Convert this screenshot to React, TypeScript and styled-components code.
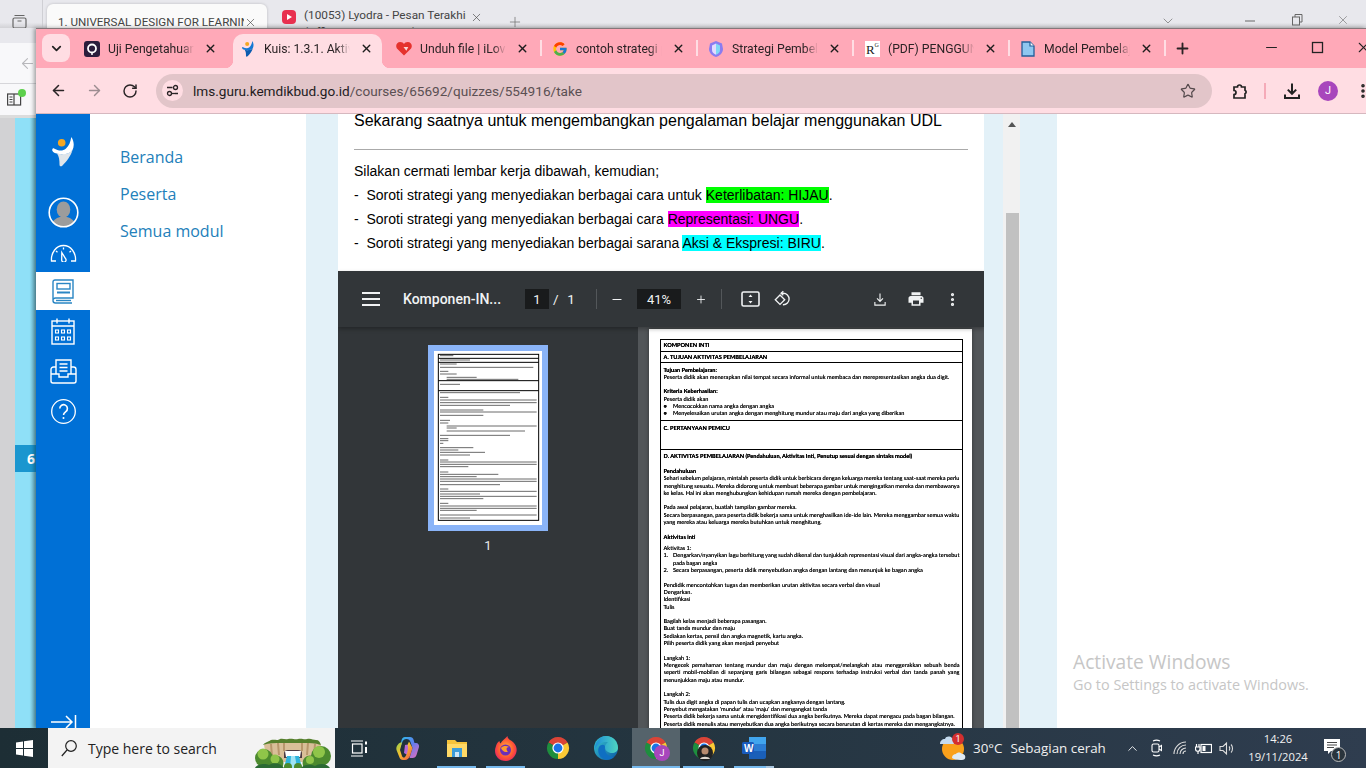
import React from "react";
import styled, { createGlobalStyle } from "styled-components";
import { ArrowLeft, ArrowRight, RotateCw, Star, MoreVertical, Plus, X, Minus, ChevronDown, ChevronUp } from "lucide-react";
import { FcGoogle } from "react-icons/fc";

const Global = createGlobalStyle`
  html, body { margin: 0; padding: 0; width: 1366px; height: 768px; overflow: hidden; background: #fff; }
  * { box-sizing: border-box; }
`;

const Desktop = styled.div`
  width: 1366px; height: 768px; display: flex; flex-direction: column; overflow: hidden;
  font-family: "Roboto", "Liberation Sans", sans-serif;
`;
const Stage = styled.div`
  position: relative; height: 728px; flex: none; background: #e8e8ed; overflow: hidden;
`;

/* background browser window */
const BackTop = styled.div`
  height: 28px; display: flex; background: linear-gradient(#e8e8ed 0 80%, #d2d2d6 100%);
`;
const BackRail = styled.div`
  width: 43px; border-right: 1px solid #cfcfd4; display: flex; align-items: center; justify-content: center; padding-right: 4px; padding-top: 15px; color: #666;
`;
const BackTab = styled.div`
  width: 220px; margin: 4px 0 0 4px; border-radius: 6px 6px 0 0; background: #fafafa; display: flex; align-items: center; padding: 12px 10px 0 11px;
  box-shadow: 0 0 3px rgba(0,0,0,.2); font-size: 11.6px; color: #444;
`;
const BackTabText = styled.span`
  flex: none; width: 186px; white-space: nowrap; overflow: hidden; line-height: 15px;
`;
const BackTabTwo = styled.div`
  width: 210px; margin: 4px 0 0 15px; display: flex; align-items: flex-start; font-size: 11.8px; color: #444;
`;
const BackYtIcon = styled.svg`
  margin-top: 6px; flex: none;
`;
const BackYtText = styled.span`
  flex: none; width: 162px; margin: 3px 0 0 8px; line-height: 17px; height: 21px; overflow: hidden; white-space: nowrap;
`;
const BackYtClose = styled.span`
  flex: none; margin: 7px 0 0 4px; display: flex;
`;
const BackPlus = styled.div`
  margin: 14px 0 0 15px; color: #777; height: 16px;
`;
const BackWinBtns = styled.div`
  margin-left: auto; padding: 13px 16px 0 0; display: flex; justify-content: flex-end; align-items: flex-start; color: #666;
`;
const BackWinGap = styled.span<{ $l: number }>`
  margin-left: ${p => p.$l}px; display: flex;
`;
const BackBody = styled.div`
  width: 36px; height: 700px; display: flex; flex-direction: column;
`;
const BackHead = styled.div`
  height: 15px; background: #e8e8ed;
`;
const BackNav = styled.div`
  height: 40px; background: #f8f8fa; display: flex; align-items: center; justify-content: flex-end; color: #b8b8bc;
`;
const BackTool = styled.div`
  height: 32px; background: #f8f8fa; border-top: 1px solid #d6d6da; display: flex; align-items: center; padding-left: 7px; position: relative;
`;
const GreenDot = styled.span`
  position: absolute; left: 18px; top: 5px; width: 8px; height: 8px; border-radius: 50%; background: #5dd04d;
`;
const BackLine = styled.div`
  height: 3px; background: #dcdcdc;
`;
const BackSplit = styled.div`
  flex: 1; display: flex;
`;
const GrayCol = styled.div`
  width: 15px; background: #d2d2d4;
`;
const CyanCol = styled.div`
  flex: 1; background: linear-gradient(90deg, #8fe0f7 70%, #6db6ca 100%); padding-top: 327px;
`;
const NumBadge = styled.div`
  height: 27px; background: #1a96cf; color: #fff; font: bold 14px "Open Sans", sans-serif; display: flex; align-items: center; padding-left: 12px;
`;

/* chrome window */
const ChromeWindow = styled.div`
  position: absolute; left: 36px; top: 28px; right: 0; bottom: 0; display: flex; flex-direction: column;
  border-top: 1px solid #84777a; box-shadow: -2px 0 4px rgba(0,0,0,.35);
`;
const TabStrip = styled.div`
  height: 39px; flex: none; background: #ffa9b8; display: flex; align-items: flex-start; padding-left: 6px; padding-top: 5px;
`;
const ListBtn = styled.div`
  width: 28px; height: 28px; border-radius: 8px; background: #ffdde3; color: #222; display: flex; align-items: center; justify-content: center; flex: none; margin-right: 3px;
`;
const Tab = styled.div<{ $active?: boolean; $divider?: boolean }>`
  position: relative; width: 156px; height: 34px; flex: none; display: flex; align-items: center; padding-left: 11px; padding-bottom: 5px;
  ${p => p.$active && `
    background: #ffdde3; border-radius: 10px 10px 0 0; margin: 0 3px 0 4px; width: 149px; padding-left: 7px; padding-bottom: 5px;
    &::before, &::after { content: ""; position: absolute; bottom: 0; width: 8px; height: 8px; }
    &::before { left: -8px; background: radial-gradient(circle at 0 0, #ffa9b8 8px, #ffdde3 8.5px); }
    &::after { right: -8px; background: radial-gradient(circle at 100% 0, #ffa9b8 8px, #ffdde3 8.5px); }
  `}
  ${p => p.$divider && `
    &::before { content: ""; position: absolute; left: -1px; top: 6px; width: 2px; height: 16px; background: #ffdde3; }
  `}
`;
const Fav = styled.span`
  width: 16px; height: 16px; flex: none; display: flex; align-items: center; justify-content: center;
`;
const TabLabel = styled.span`
  width: 86px; margin-left: 8px; flex: none; white-space: nowrap; overflow: hidden; font-size: 12.2px; color: #2b2325;
  mask-image: linear-gradient(90deg, #000 85%, transparent);
`;
const TabClose = styled.span`
  margin-left: 10px; display: flex; color: #1c1c1c;
`;
const TabEnd = styled.div`
  width: 2px; height: 16px; margin: 6px 0 0 -1px; background: #ffdde3; flex: none;
`;
const NewTab = styled.div`
  margin: 6px 0 0 8px; color: #2a2224; display: flex; height: 16px; flex: none;
`;
const WinBtns = styled.div`
  margin-left: auto; display: flex; gap: 29px; padding-top: 5px; color: #222; margin-right: -6px;
`;
const ToolBar = styled.div`
  height: 46px; flex: none; background: #ffdde3; border-bottom: 1px solid #d6b8bf; display: flex; align-items: center; padding-left: 14px;
`;
const NavBtn = styled.span<{ $dim?: boolean }>`
  display: flex; width: 36px; flex: none; color: ${p => (p.$dim ? "#9c8c90" : "#2a2426")};
`;
const Omnibox = styled.div`
  width: 1056px; height: 34px; margin-left: -2px; flex: none; border-radius: 17px; background: #e2c5c9; display: flex; align-items: center; padding-left: 6px; padding-right: 16px;
`;
const InfoChip = styled.span`
  width: 21px; height: 21px; border-radius: 50%; background: #ffdde3; display: flex; align-items: center; justify-content: center; flex: none;
`;
const Url = styled.span`
  margin-left: 10px; font-size: 13.6px; color: #5b5053; white-space: nowrap; flex: 1;
  & b { font-weight: 400; color: #231c1e; }
`;
const TailIcons = styled.div`
  display: flex; align-items: center; margin-left: 19px; color: #222; flex: none;
`;
const ToolSep = styled.span`
  width: 1.5px; height: 16px; background: #f5aab8; margin: 0 17px 0 15px;
`;
const ProfileChip = styled.span`
  width: 20px; height: 20px; border-radius: 50%; background: #a846bc; color: #fff; font-size: 11px; display: flex; align-items: center; justify-content: center; margin: 0 16px 0 17.5px; flex: none;
`;

/* moodle page */
const PageArea = styled.div`
  flex: 1; min-height: 0; display: flex; overflow: hidden; background: #fff;
`;
const Rail = styled.nav`
  width: 54px; flex: none; background: #0070d6; display: flex; flex-direction: column;
`;
const RailItem = styled.div<{ $h: number; $active?: boolean }>`
  height: ${p => p.$h}px; flex: none; display: flex; align-items: center; justify-content: center; background: ${p => (p.$active ? "#fff" : "transparent")}; color: #fff;
`;
const RailFoot = styled.div`
  margin-top: auto; height: 14px; display: flex; justify-content: center; align-items: flex-start; color: #fff; overflow: hidden;
`;
const MenuPanel = styled.div`
  width: 216px; flex: none; padding: 25px 0 0 30px; display: flex; flex-direction: column;
`;
const MenuLink = styled.a`
  height: 37px; font: 16px/37px "Open Sans", sans-serif; color: #2380ba;
`;
const Gutter = styled.div<{ $w: number }>`
  width: ${p => p.$w}px; flex: none; background: #e3f1f8;
`;
const Article = styled.main`
  width: 646px; flex: none; background: #fff; overflow: hidden; font-family: "Liberation Sans", Arial, sans-serif; color: #000;
`;
const Lead = styled.p`
  margin: -3px 16px 0; font-size: 16px; line-height: 20px; white-space: nowrap;
`;
const Rule = styled.hr`
  margin: 18px 16px 9px; border: 0; border-top: 1px solid #aaa; height: 1px;
`;
const Line = styled.p`
  margin: 0 16px; font-size: 14px; line-height: 24px; white-space: pre;
`;
const Mark = styled.span<{ $c: string }>`
  background: ${p => p.$c};
`;

const Viewer = styled.section`
  margin-top: 16px; height: 457px; display: flex; flex-direction: column; font-family: "Roboto", sans-serif;
`;
const VBar = styled.div`
  height: 56px; flex: none; background: #323639; color: #f1f3f4; display: flex; align-items: center; position: relative; box-shadow: 0 2px 4px rgba(0,0,0,.3); z-index: 1;
`;
const VSlot = styled.span<{ $w: number; $l: number }>`
  width: ${p => p.$w}px; margin-left: ${p => p.$l}px; flex: none; display: flex; align-items: center; justify-content: center; height: 20px;
`;
const VTitle = styled.span`
  margin-left: 23px; width: 101px; flex: none; font-size: 14px; font-weight: 500; white-space: nowrap;
`;
const VField = styled.span<{ $w: number; $l: number }>`
  width: ${p => p.$w}px; margin-left: ${p => p.$l}px; height: 20px; background: #191b1c; flex: none; font-size: 13px; display: flex; align-items: center; justify-content: center;
`;
const VCount = styled.span`
  margin-left: 4px; flex: none; font-size: 13.5px; width: 20px; white-space: pre; word-spacing: 1px;
`;
const VSep = styled.span<{ $l: number }>`
  width: 1px; height: 20px; background: #53575a; margin-left: ${p => p.$l}px; flex: none;
`;
const VBody = styled.div`
  flex: 1; min-height: 0; display: flex; overflow: hidden;
`;
const ThumbPane = styled.aside`
  width: 300px; flex: none; background: #323639; display: flex; flex-direction: column; align-items: center; padding-top: 18px;
`;
const ThumbFrame = styled.div`
  width: 120px; height: 186px; background: #fff; border: 6px solid #8ab4f8; display: flex;
`;
const ThumbNum = styled.div`
  margin-top: 7px; color: #e8eaed; font-size: 13px; line-height: 15px;
`;
const SheetArea = styled.div`
  flex: 1; background: #525659; padding: 2px 12px 0 11px; overflow: hidden;
`;
const Sheet = styled.div`
  background: #fff; padding: 10px 9px 0 11px; height: 500px; box-shadow: 0 0 4px rgba(0,0,0,.4);
`;
const DocTable = styled.div`
  border: 1px solid #000; font: 5.65px/7.32px "Lato", "Open Sans", sans-serif; color: #111; filter: blur(0.3px); width: 303px; text-rendering: geometricPrecision; text-shadow: 0 0 .4px #000;
`;
const DocRow = styled.div<{ $h?: number; $top?: number }>`
  border-bottom: 1px solid #000; padding: ${p => p.$top ?? 1.5}px 2.5px 0 2.5px; ${p => (p.$h ? `height: ${p.$h}px;` : "")}
`;
const DocHead = styled.div`
  font-weight: 700; color: #000; white-space: nowrap; height: 7.32px;
`;
const DocText = styled.div<{ $fill?: boolean; $indent?: number; $gap?: number }>`
  height: 7.32px; white-space: nowrap; padding-left: ${p => p.$indent ?? 0}px; margin-top: ${p => p.$gap ?? 0}px;
  ${p => p.$fill && `white-space: normal; overflow: hidden; word-spacing: -.4px; text-align: justify; text-align-last: justify;`}
`;
const DocBlank = styled.div`
  height: 7.32px;
`;
const ItemMark = styled.span`
  position: absolute; margin-left: -9.5px;
`;

/* scrollbar */
const Scroll = styled.div`
  width: 17px; flex: none; background: #f1f1f1; display: flex; flex-direction: column;
`;
const ScrollHead = styled.div`
  height: 99px; flex: none; display: flex; justify-content: center; padding: 8px 0 0 1px;
`;
const ScrollThumb = styled.div`
  flex: 1; background: #c1c1c1; margin: 0 1px 0 3px;
`;
const RightPane = styled.div`
  flex: 1; background: #fff; padding: 535px 0 0 16px; font-family: "Open Sans", sans-serif; color: #c6c6c6;
`;
const WmTitle = styled.div`
  font-size: 19.2px; line-height: 25px;
`;
const WmSub = styled.div`
  font-size: 14.4px; line-height: 22px;
`;

/* taskbar */
const Taskbar = styled.footer`
  height: 40px; flex: none; display: flex; align-items: stretch; background: linear-gradient(90deg, #1d2e35, #243540 50%, #2f3d4f); color: #fff;
`;
const StartBtn = styled.div`
  width: 48px; flex: none; display: flex; align-items: center; justify-content: center;
`;
const SearchBox = styled.div`
  width: 287px; flex: none; background: #f3f3f3; display: flex; align-items: center; padding-left: 13px; color: #222; position: relative;
  font: 14px "Open Sans", sans-serif;
`;
const SearchText = styled.span`
  margin-left: 11px;
`;
const SearchArt = styled.span`
  position: absolute; right: 2px; top: 0; display: flex;
`;
const TaskItem = styled.div<{ $w: number; $l?: number; $active?: boolean; $under?: boolean }>`
  width: ${p => p.$w}px; margin-left: ${p => p.$l ?? 0}px; flex: none; display: flex; align-items: center; justify-content: center; position: relative;
  background: ${p => (p.$active ? "#55636b" : "transparent")};
  ${p => p.$under && `border-bottom: 2px solid #76b9ed; padding-top: 2px;`}
`;
const TaskBadge = styled.span`
  position: absolute; left: 22px; top: 17px; width: 16px; height: 16px; border-radius: 50%; background: #a846bc; color: #fff; font-size: 9px; display: flex; align-items: center; justify-content: center;
`;
const TaskPhoto = styled.svg`
  position: absolute; left: 14px; top: 17px;
`;
const WordTail = styled.span`
  position: absolute; right: -8px; bottom: -2px; width: 8px; height: 2px; background: #a9c6df;
`;
const WordIcon = styled.svg`
  margin-right: -8px;
`;
const Weather = styled.div`
  margin-left: 174px; width: 30px; flex: none; display: flex; align-items: center; position: relative;
`;
const RedBadge = styled.span`
  position: absolute; left: 12px; top: 5px; width: 12px; height: 12px; border-radius: 50%; background: #d32f2f; color: #fff; font-size: 9px; display: flex; align-items: center; justify-content: center;
`;
const WeatherText = styled.span`
  margin-left: 3px; font: 13.4px "Open Sans", sans-serif; color: #f0f0f0; white-space: pre; display: flex; align-items: center; width: 147px; flex: none;
`;
const WeatherCond = styled.span`
  margin-left: 8px;
`;
const Tray = styled.div`
  display: flex; align-items: center; flex: none; color: #fff; width: 120px;
`;
const TraySlot = styled.span<{ $w: number }>`
  width: ${p => p.$w}px; flex: none; display: flex; justify-content: center; align-items: center;
`;
const Clock = styled.div`
  width: 84px; flex: none; margin-left: -4px; font: 11.2px/18px "Open Sans", sans-serif; text-align: center; color: #f2f2f2; padding-top: 2px;
`;
const Notify = styled.div`
  flex: none; width: 30px; margin-left: 4px; position: relative; display: flex; align-items: center; padding-bottom: 4px;
`;
const NotifyCount = styled.span`
  position: absolute; left: 7px; top: 19px; width: 15px; height: 15px; border-radius: 50%; background: #2a343c; border: 1px solid #bbb; font: 10px "Open Sans", sans-serif; color: #fff; display: flex; align-items: center; justify-content: center;
`;
const ThumbSvg = styled.svg`
  filter: blur(.35px);
`;

/* ---- icons ---- */
const GuruMark = ({ s = 30, c = "#fff", shade = "#dfe5ea" }: { s?: number; c?: string; shade?: string }) => (
  <svg width={(s * 22) / 30} height={s} viewBox="0 0 22 30">
    <path d="M5 16.500C10 18 18 17 20.500 13 19 19 14 25 10.500 28.500 9 30 7.500 29.500 7.500 27.500 7.500 23 7 19 5 16.500z" fill={shade} />
    <path d="M19.300 0C22 4 22.500 9 20.500 13 18 17 12 18 7 17 4 16.500 1 15.500.3 13.700 0 12 1 11 2 11.500 6 13.500 10 15 14 11.500 17 9 18.500 5 19.300 0z" fill={c} />
    <circle cx="9.700" cy="5.700" r="3.800" fill="#f4a724" />
  </svg>
);
const ChromeIcon = ({ s = 24 }: { s?: number }) => (
  <svg width={s} height={s} viewBox="0 0 24 24">
    <path d="M12 12 2.470 6.500A11 11 0 0 1 21.530 6.500z" fill="#db4437" />
    <path d="M12 12l9.530-5.500A11 11 0 0 1 12 23z" fill="#fcc934" />
    <path d="M12 12v11A11 11 0 0 1 2.470 6.500z" fill="#1e8e3e" />
    <circle cx="12" cy="12" r="5.600" fill="#fff" />
    <circle cx="12" cy="12" r="4.400" fill="#1a73e8" />
  </svg>
);
const Landscape = () => (
  <svg width="78" height="40" viewBox="0 0 78 40">
    <path d="M9 17 16 12H58L66 17 62 34H12z" fill="#d9bf98" />
    <g stroke="#b8976c" strokeWidth="2"><path d="M16 16l1 12M23 15l1 12M29 15v8M47 15v8M53 15l-1 12M60 16l-1 12" /></g>
    <g fill="#557f2c"><path d="M8 17C10 14 13 14 16 12c4-1 6 1 9-1 3-1 5 1 8 0 4-1 7 1 10 0 4-1 6 1 9 0 4-1 6 1 9 1 3 0 4 2 5 5-6-2-12-2-17-2H27c-7 0-13 0-19 2z" /></g>
    <path d="M29 25c0-2 2-3 4-3h10c2 0 4 1 4 3v5H29z" fill="#4b3a42" />
    <path d="M30 23h16l-1 6H31z" fill="#fff" />
    <path d="M32 28h12l3 12H29z" fill="#2fb4dc" />
    <path d="M36 28h4l2 12h-7z" fill="#9fe4f4" />
    <g fill="#4c8a2e">
      <circle cx="9" cy="30" r="9" /><circle cx="21" cy="35" r="7.500" /><circle cx="33" cy="39" r="4" />
      <circle cx="66" cy="28" r="10" /><circle cx="55" cy="35" r="7.500" /><circle cx="43" cy="39" r="4" />
    </g>
    <g fill="#8fc549">
      <circle cx="8" cy="26" r="5.500" /><circle cx="20" cy="31" r="4.500" /><circle cx="64" cy="24" r="6" /><circle cx="55" cy="32" r="4" />
    </g>
    <g fill="#2b6a34"><path d="M0 40c2-4 10-5 14-3 5-3 12-2 15 3zM46 40c3-4 10-4 14-2 4-3 12-3 15 2z" /></g>
  </svg>
);
const Doc = () => (
  <svg width="14" height="16" viewBox="0 0 14 16"><path d="M1 1h8l4 4v10H1z" fill="#8fc7f0" stroke="#245f99" strokeWidth="1.300" /><path d="M9 1v4h4" fill="#fff" stroke="#245f99" strokeWidth="1.200" /></svg>
);

const tabs = [
  { label: "Uji Pengetahuan Pemahaman", icon: <svg width="16" height="16" viewBox="0 0 16 16"><rect width="16" height="16" rx="3" fill="#2b1d3c" /><circle cx="8" cy="7.500" r="4" fill="none" stroke="#fff" strokeWidth="1.800" /><circle cx="8" cy="13" r="1" fill="#fff" /></svg> },
  { label: "Kuis: 1.3.1. Aktivitas", active: true, icon: <GuruMark s={16} c="#1478d4" shade="#0b5cb0" /> },
  { label: "Unduh file | iLovePDF", icon: <svg width="17" height="15" viewBox="0 0 17 15"><path d="M8.500 15 1 7.500C-1 4.500 1 .5 4.500.5c2 0 3.300 1 4 2.200C9.200 1.500 10.500.5 12.500.5 16 .5 18 4.500 16 7.500z" fill="#e5322d" /><path d="M8 6l5 0-2 4z" fill="#fff" opacity=".8" /></svg> },
  { label: "contoh strategi pembelajaran", divider: true, icon: <FcGoogle size={16} /> },
  { label: "Strategi Pembelajaran", divider: true, icon: <svg width="14" height="16" viewBox="0 0 14 16"><path d="M7 0l6 2.500 1 5.500c0 4-3.500 7-7 8-3.500-1-7-4-7-8l1-5.500z" fill="#8a7cf0" /><path d="M7 2.500 11 4.500v4.500c0 2.500-2 4-4 4.700z" fill="#7fd8f5" /><path d="M7 2.500 3 4.500v4.500c0 2.500 2 4 4 4.700z" fill="#e3dcff" /></svg> },
  { label: "(PDF) PENGGUNAAN MODEL", divider: true, icon: <svg width="15" height="16" viewBox="0 0 15 16"><rect width="15" height="16" fill="#fff" /><text x="1" y="13" fontFamily="Liberation Serif" fontSize="13" fill="#222">R</text><text x="9.500" y="6" fontFamily="Liberation Serif" fontSize="6" fill="#222">G</text></svg> },
  { label: "Model Pembelajaran", divider: true, icon: <Doc /> },
];

const pdfHead = (t: string) => <DocHead>{t}</DocHead>;

const thumbLines: [number, number, number][] = [
  [47,60,100],[60,60,150],[72,60,110],[82,60,340],[94,60,85],[102,60,110],[112,80,170],[118,80,295],[133,60,120],[158,60,300],[172,60,85],[180,60,350],[188,60,350],[196,60,270],[210,60,190],[216,60,350],[226,60,190],[241,60,90],[249,60,85],[258,80,350],[264,80,110],[273,80,315],[286,60,270],[296,60,85],[302,60,85],[310,60,70],[323,60,160],[330,60,115],[337,60,195],[345,60,150],[360,60,85],[366,60,350],[373,60,350],[380,60,145],[396,60,85],[403,60,235],[410,60,170],[417,60,350],[424,60,350],[434,60,240],[447,60,85],[454,60,350],[462,60,180],[469,60,350],[476,60,190],[490,60,85],[498,60,350],[505,60,350],[511,60,170],[525,60,350],[534,60,150],
];

const Thumb = () => (
  <ThumbSvg width="108" height="174" viewBox="42 33 324 522">
    <rect x="55" y="43" width="301" height="498" fill="#fff" stroke="#000" strokeWidth="3" />
    {[55, 67, 122, 152].map(y => <line key={y} x1="55" x2="356" y1={y} y2={y} stroke="#000" strokeWidth="3" />)}
    {thumbLines.map(([y, a, b], i) => <line key={i} x1={a} x2={b} y1={y} y2={y} stroke="#6a6a6a" strokeWidth="3" />)}
  </ThumbSvg>
);

export default function App() {
  return (
    <>
      <Global />
      <Desktop>
        <Stage>
          <BackTop>
            <BackRail>
              <svg width="15" height="15" viewBox="0 0 15 15" fill="none" stroke="#666" strokeWidth="1.200"><rect x="1" y="4" width="13" height="10" rx="1.500" /><path d="M2.500 1.500h10M5.500 7h4" /></svg>
            </BackRail>
            <BackTab>
              <BackTabText>1. UNIVERSAL DESIGN FOR LEARNING</BackTabText>
              <X size={13} strokeWidth={1.200} />
            </BackTab>
            <BackTabTwo>
              <BackYtIcon width="14" height="14" viewBox="0 0 14 14"><rect width="14" height="14" rx="4" fill="#e8304f" /><path d="M5 4l5 3-5 3z" fill="#fff" /></BackYtIcon>
              <BackYtText>(10053) Lyodra - Pesan Terakhir<br />(Official Music Video)</BackYtText>
              <BackYtClose><X size={13} strokeWidth={1.200} /></BackYtClose>
            </BackTabTwo>
            <BackPlus><Plus size={16} strokeWidth={1.200} /></BackPlus>
            <BackWinBtns>
              <ChevronDown size={16} strokeWidth={1} />
              <BackWinGap $l={68}><svg width="12" height="16" viewBox="0 0 12 16"><path d="M1 8h10" stroke="#666" /></svg></BackWinGap>
              <BackWinGap $l={35}><svg width="12" height="14" viewBox="0 0 12 14" fill="none" stroke="#666"><rect x="1.500" y="4" width="7" height="8" /><path d="M4 4V1.500h7V9H8.500" /></svg></BackWinGap>
              <BackWinGap $l={33}><X size={14} strokeWidth={1} /></BackWinGap>
            </BackWinBtns>
          </BackTop>
          <BackBody>
            <BackHead />
            <BackNav><ArrowLeft size={17} strokeWidth={1.500} /></BackNav>
            <BackTool>
              <svg width="15" height="13" viewBox="0 0 15 13" fill="none" stroke="#444" strokeWidth="1.200"><rect x=".6" y="1" width="13" height="11" /><path d="M7 1v11M2.500 4h3M2.500 6.500h3M2.500 9h3" /></svg>
              <GreenDot />
            </BackTool>
            <BackLine />
            <BackSplit>
              <GrayCol />
              <CyanCol><NumBadge>6</NumBadge></CyanCol>
            </BackSplit>
          </BackBody>

          <ChromeWindow>
            <TabStrip>
              <ListBtn><ChevronDown size={15} strokeWidth={2.800} /></ListBtn>
              {tabs.map(t => (
                <Tab key={t.label} $active={t.active} $divider={t.divider}>
                  <Fav>{t.icon}</Fav>
                  <TabLabel>{t.label}</TabLabel>
                  <TabClose><X size={13} strokeWidth={2.600} /></TabClose>
                </Tab>
              ))}
              <TabEnd />
              <NewTab><Plus size={17} strokeWidth={2.600} /></NewTab>
              <WinBtns>
                <Minus size={17} strokeWidth={1.500} />
                <svg width="17" height="17" viewBox="0 0 17 17" fill="none" stroke="#222" strokeWidth="1.300"><rect x="3.500" y="3.500" width="10" height="10" /></svg>
                <X size={17} strokeWidth={1.500} />
              </WinBtns>
            </TabStrip>
            <ToolBar>
              <NavBtn><ArrowLeft size={17} strokeWidth={2.200} /></NavBtn>
              <NavBtn $dim><ArrowRight size={17} strokeWidth={2} /></NavBtn>
              <NavBtn><RotateCw size={16} strokeWidth={2.200} /></NavBtn>
              <Omnibox>
                <InfoChip>
                  <svg width="13" height="13" viewBox="0 0 13 13" fill="none" stroke="#2b2426" strokeWidth="1.300"><path d="M1 3.500h5.500M9 9.500h3" /><circle cx="9.500" cy="3.500" r="2" /><circle cx="3.500" cy="9.500" r="2" /><path d="M6 9.500h3" /></svg>
                </InfoChip>
                <Url><b>lms.guru.kemdikbud.go.id</b>/courses/65692/quizzes/554916/take</Url>
                <Star size={16} strokeWidth={1.800} color="#554a4d" />
              </Omnibox>
              <TailIcons>
                <svg width="18" height="18" viewBox="0 0 18 18" fill="none" stroke="#222" strokeWidth="1.700"><path d="M3 5h3.500a2 2 0 0 1 4 0H14v3.200a2 2 0 0 1 0 3.600V16H3v-3.500a2 2 0 0 0 0-4z" /></svg>
                <ToolSep />
                <svg width="18" height="18" viewBox="0 0 18 18" fill="none" stroke="#222" strokeWidth="2"><path d="M9 1.500v10M4.800 7.600 9 11.800l4.200-4.200M2 12.500V16h14v-3.500" /></svg>
                <ProfileChip>J</ProfileChip>
                <MoreVertical size={18} strokeWidth={2.800} />
              </TailIcons>
            </ToolBar>
            <PageArea>
              <Rail>
                <RailItem $h={76}><GuruMark /></RailItem>
                <RailItem $h={44}>
                  <svg width="31" height="31" viewBox="0 0 31 31"><defs><clipPath id="av"><circle cx="15.500" cy="15.500" r="14" /></clipPath></defs><g clipPath="url(#av)" fill="#9c9c9c"><ellipse cx="15.500" cy="12.500" rx="6.800" ry="8" /><path d="M3 31c0-7 5-10 9-11h7c4 1 9 4 9 11z" /></g><circle cx="15.500" cy="15.500" r="14.300" fill="none" stroke="#fff" strokeWidth="1.600" /></svg>
                </RailItem>
                <RailItem $h={38}>
                  <svg width="27" height="18" viewBox="0 0 27 18" fill="none" stroke="#fff" strokeWidth="1.300"><path d="M6 17H1.500C.8 9 6 1.500 13.500 1.500S26.200 9 25.500 17H21" /><path d="M11.800 8.500l3.700 6a2.200 2.200 0 1 1-3.800 1.600z" /><path d="M13.500 3.500v2M6 7l1.500 1.200M21 7l-1.500 1.200" /></svg>
                </RailItem>
                <RailItem $h={38} $active>
                  <svg width="22" height="25" viewBox="0 0 22 25" fill="none" stroke="#2a86c4" strokeWidth="1.400"><path d="M1 21V3a2 2 0 0 1 2-2h18v18H3.500C2 19 1 20 1 21.500S2 24 3.500 24H20" /><rect x="5" y="4.500" width="13" height="5.500" /><path d="M5 13.500h13" strokeWidth="2" /><path d="M4 21.500h15" /></svg>
                </RailItem>
                <RailItem $h={42}>
                  <svg width="24" height="27" viewBox="0 0 24 27" fill="none" stroke="#fff" strokeWidth="1.400"><rect x="1" y="3" width="22" height="23" /><path d="M1 8h22M6 .5v5M18 .5v5" /><g strokeWidth="1.100"><rect x="4.500" y="12" width="3" height="3" /><rect x="10.500" y="12" width="3" height="3" /><rect x="16.500" y="12" width="3" height="3" /><rect x="4.500" y="19" width="3" height="3" /><rect x="10.500" y="19" width="3" height="3" /><rect x="16.500" y="19" width="3" height="3" /></g></svg>
                </RailItem>
                <RailItem $h={39}>
                  <svg width="27" height="25" viewBox="0 0 27 25" fill="none" stroke="#fff" strokeWidth="1.400"><path d="M6 15V1h15v14" /><path d="M9.500 5h8M9.500 8.500h8M9.500 12h8" /><path d="M6 8H3.500C2 8 1 9 1 10.500V22a2 2 0 0 0 2 2h21a2 2 0 0 0 2-2V10.500C26 9 25 8 23.500 8H21" /><path d="M1 15h8v3h9v-3h8" /></svg>
                </RailItem>
                <RailItem $h={40}>
                  <svg width="25" height="25" viewBox="0 0 25 25" fill="none" stroke="#fff" strokeWidth="1.300"><circle cx="12.500" cy="12.500" r="11.800" /><path d="M8.800 9.500a3.800 3.800 0 1 1 6 3.100c-1.400 1-2.300 1.700-2.300 3.400" strokeWidth="1.600" /><circle cx="12.500" cy="19" r="1" fill="#fff" stroke="none" /></svg>
                </RailItem>
                <RailFoot>
                  <svg width="27" height="16" viewBox="0 0 27 16" fill="none" stroke="#fff" strokeWidth="1.500"><path d="M1 8h21M16 2l6 6-6 6M25.500 1v14" /></svg>
                </RailFoot>
              </Rail>
              <MenuPanel>
                <MenuLink>Beranda</MenuLink>
                <MenuLink>Peserta</MenuLink>
                <MenuLink>Semua modul</MenuLink>
              </MenuPanel>
              <Gutter $w={32} />
              <Article>
                <Lead>Sekarang saatnya untuk mengembangkan pengalaman belajar menggunakan UDL</Lead>
                <Rule />
                <Line>Silakan cermati lembar kerja dibawah, kemudian;</Line>
                <Line>-  Soroti strategi yang menyediakan berbagai cara untuk <Mark $c="#00ff00">Keterlibatan: HIJAU</Mark>.</Line>
                <Line>-  Soroti strategi yang menyediakan berbagai cara <Mark $c="#ff00ff">Representasi: UNGU</Mark>.</Line>
                <Line>-  Soroti strategi yang menyediakan berbagai sarana <Mark $c="#00ffff">Aksi &amp; Ekspresi: BIRU</Mark>.</Line>
                <Viewer>
                  <VBar>
                    <VSlot $w={18} $l={24}>
                      <svg width="18" height="14" viewBox="0 0 18 14" fill="#f1f3f4"><rect y="0" width="18" height="2" /><rect y="6" width="18" height="2" /><rect y="12" width="18" height="2" /></svg>
                    </VSlot>
                    <VTitle>Komponen-IN...</VTitle>
                    <VField $w={24} $l={21}>1</VField>
                    <VCount>/  1</VCount>
                    <VSep $l={23} />
                    <VSlot $w={14} $l={13}><Minus size={21} strokeWidth={1.800} /></VSlot>
                    <VField $w={44} $l={13}>41%</VField>
                    <VSlot $w={12} $l={14}><Plus size={21} strokeWidth={1.800} /></VSlot>
                    <VSep $l={14} />
                    <VSlot $w={19} $l={19}>
                      <svg width="19" height="16" viewBox="0 0 19 16" fill="none" stroke="#f1f3f4" strokeWidth="1.600"><rect x="1" y="1" width="17" height="14" rx="1.500" /><path d="M9.500 3.500 7.500 6h4zM9.500 12.500l-2-2.500h4z" fill="#f1f3f4" stroke="none" /></svg>
                    </VSlot>
                    <VSlot $w={16} $l={14}>
                      <svg width="18" height="18" viewBox="0 0 18 18" fill="none" stroke="#f1f3f4" strokeWidth="1.500"><rect x="3" y="6" width="7.500" height="7.500" transform="rotate(45 6.750 9.750)" /><path d="M8 2.500h2.500a6.500 6.500 0 0 1 0 13H10" /><path d="M10.500 .3 8 2.500l2.500 2.200" /></svg>
                    </VSlot>
                    <VSlot $w={12} $l={84}>
                      <svg width="13" height="15" viewBox="0 0 14 16" fill="none" stroke="#f1f3f4" strokeWidth="1.300"><path d="M7 1v9M3.500 6.800 7 10.200l3.500-3.400M1 11v3.500h12V11" /></svg>
                    </VSlot>
                    <VSlot $w={18} $l={21}>
                      <svg width="22" height="22" viewBox="0 0 24 24" fill="#f1f3f4"><path d="M19 8H5c-1.660 0-3 1.340-3 3v6h4v4h12v-4h4v-6c0-1.660-1.340-3-3-3zm-3 11H8v-5h8v5zm3-7c-.55 0-1-.45-1-1s.45-1 1-1 1 .45 1 1-.45 1-1 1zm-1-9H6v4h12V3z" /></svg>
                    </VSlot>
                    <VSlot $w={18} $l={18}><MoreVertical size={17} strokeWidth={2.500} /></VSlot>
                  </VBar>
                  <VBody>
                    <ThumbPane>
                      <ThumbFrame><Thumb /></ThumbFrame>
                      <ThumbNum>1</ThumbNum>
                    </ThumbPane>
                    <SheetArea>
                      <Sheet>
                        <DocTable>
                          <DocRow $h={12} $top={2}>{pdfHead("KOMPONEN INTI")}</DocRow>
                          <DocRow $h={11} $top={2}>{pdfHead("A. TUJUAN AKTIVITAS PEMBELAJARAN")}</DocRow>
                          <DocRow $h={58} $top={3.500}>
                            {pdfHead("Tujuan Pembelajaran:")}
                            <DocText>Peserta didik akan menerapkan nilai tempat secara informal untuk membaca dan merepresentasikan angka dua digit.</DocText>
                            <DocBlank />
                            {pdfHead("Kriteria Keberhasilan:")}
                            <DocText>Peserta didik akan</DocText>
                            <DocText $indent={9.500}><ItemMark>●</ItemMark>Mencocokkan nama angka dengan angka</DocText>
                            <DocText $indent={9.500}><ItemMark>●</ItemMark>Menyelesaikan urutan angka dengan menghitung mundur atau maju dari angka yang diberikan</DocText>
                          </DocRow>
                          <DocRow $h={29} $top={4}>{pdfHead("C. PERTANYAAN PEMICU")}</DocRow>
                          <DocRow $top={3.300}>
                            {pdfHead("D. AKTIVITAS PEMBELAJARAN (Pendahuluan, Aktivitas Inti, Penutup sesuai dengan sintaks model)")}
                            <DocBlank />
                            {pdfHead("Pendahuluan")}
                            <DocText $fill>Sehari sebelum pelajaran, mintalah peserta didik untuk berbicara dengan keluarga mereka tentang saat-saat mereka perlu</DocText>
                            <DocText $fill>menghitung sesuatu. Mereka didorong untuk membuat beberapa gambar untuk mengingatkan mereka dan membawanya</DocText>
                            <DocText>ke kelas. Hal ini akan menghubungkan kehidupan rumah mereka dengan pembelajaran.</DocText>
                            <DocBlank />
                            <DocText>Pada awal pelajaran, buatlah tampilan gambar mereka.</DocText>
                            <DocText $fill>Secara berpasangan, para peserta didik bekerja sama untuk menghasilkan ide-ide lain. Mereka menggambar semua waktu</DocText>
                            <DocText>yang mereka atau keluarga mereka butuhkan untuk menghitung.</DocText>
                            <DocBlank />
                            {pdfHead("Aktivitas inti")}
                            <DocText $gap={4}>Aktivitas 1:</DocText>
                            <DocText $indent={9.500} $fill><ItemMark>1.</ItemMark>Dengarkan/nyanyikan lagu berhitung yang sudah dikenal dan tunjukkah representasi visual dari angka-angka tersebut</DocText>
                            <DocText $indent={9.500}>pada bagan angka</DocText>
                            <DocText $indent={9.500}><ItemMark>2.</ItemMark>Secara berpasangan, peserta didik menyebutkan angka dengan lantang dan menunjuk ke bagan angka</DocText>
                            <DocBlank />
                            <DocText>Pendidik mencontohkan tugas dan memberikan urutan aktivitas secara verbal dan visual</DocText>
                            <DocText>Dengarkan.</DocText>
                            <DocText>Identifikasi</DocText>
                            <DocText>Tulis</DocText>
                            <DocBlank />
                            <DocText>Bagilah kelas menjadi beberapa pasangan.</DocText>
                            <DocText>Buat tanda mundur dan maju</DocText>
                            <DocText>Sediakan kertas, pensil dan angka magnetik, kartu angka.</DocText>
                            <DocText>Pilih peserta didik yang akan menjadi penyebut</DocText>
                            <DocBlank />
                            <DocText>Langkah 1:</DocText>
                            <DocText $fill>Mengecek pemahaman tentang mundur dan maju dengan melompat/melangkah atau menggerakkan sebuah benda</DocText>
                            <DocText $fill>seperti mobil-mobilan di sepanjang garis bilangan sebagai respons terhadap instruksi verbal dan tanda panah yang</DocText>
                            <DocText>menunjukkan maju atau mundur.</DocText>
                            <DocBlank />
                            <DocText>Langkah 2:</DocText>
                            <DocText>Tulis dua digit angka di papan tulis dan ucapkan angkanya dengan lantang.</DocText>
                            <DocText>Penyebut mengatakan 'mundur' atau 'maju' dan mengangkat tanda</DocText>
                            <DocText>Peserta didik bekerja sama untuk mengidentifikasi dua angka berikutnya. Mereka dapat mengacu pada bagan bilangan.</DocText>
                            <DocText>Peserta didik menulis atau menyebutkan dua angka berikutnya secara berurutan di kertas mereka dan mengangkatnya.</DocText>
                          </DocRow>
                        </DocTable>
                      </Sheet>
                    </SheetArea>
                  </VBody>
                </Viewer>
              </Article>
              <Gutter $w={19} />
              <Scroll>
                <ScrollHead>
                  <svg width="8" height="5" viewBox="0 0 8 5"><path d="M4 0l4 5H0z" fill="#555" /></svg>
                </ScrollHead>
                <ScrollThumb />
              </Scroll>
              <Gutter $w={37} />
              <RightPane>
                <WmTitle>Activate Windows</WmTitle>
                <WmSub>Go to Settings to activate Windows.</WmSub>
              </RightPane>
            </PageArea>
          </ChromeWindow>
        </Stage>

        <Taskbar>
          <StartBtn>
            <svg width="17" height="17" viewBox="0 0 17 17" fill="#fff"><path d="M0 2.400 7 1.400v6.500H0zM8 1.300 17 0v7.900H8zM0 9h7v6.500L0 14.600zM8 9h9v8l-9-1.300z" /></svg>
          </StartBtn>
          <SearchBox>
            <svg width="16" height="17" viewBox="0 0 16 17" fill="none" stroke="#222" strokeWidth="1.200"><circle cx="10" cy="6" r="5.300" /><path d="M6 10 .8 16" /></svg>
            <SearchText>Type here to search</SearchText>
            <SearchArt><Landscape /></SearchArt>
          </SearchBox>
          <TaskItem $w={50} $l={-1}>
            <svg width="17" height="17" viewBox="0 0 17 17" fill="none" stroke="#fff" strokeWidth="1.200"><rect x="1.500" y="4" width="9.500" height="9" /><path d="M0 1h12M0 16h12" /><path d="M15 1.500v3M15 7v6" strokeWidth="2" /></svg>
          </TaskItem>
          <TaskItem $w={46}>
            <svg width="25" height="25" viewBox="0 0 25 25"><defs><linearGradient id="c1" x1="0" y1="0" x2="1" y2="1"><stop offset="0" stopColor="#29c3e8" /><stop offset=".5" stopColor="#5f7df0" /><stop offset="1" stopColor="#f06ab8" /></linearGradient><linearGradient id="c2" x1="0" y1="0" x2="1" y2="1"><stop offset="0" stopColor="#8fd14f" /><stop offset=".45" stopColor="#f6c02e" /><stop offset="1" stopColor="#ee4a4a" /></linearGradient></defs><path d="M10 9c3-1 6 0 7 3l-3 8-5-3z" fill="#b66ad8" /><path d="M10 1h5c2 0 3 1 3.500 2.500L19.500 7H21c2 0 3.500 2 3 4l-2.500 8c-.6 2-2 3-4 3h-3l3-10-2-6c-.6-2-2-3-4-3-2.500 0-3.500 1-4.500 4L4 14 6.500 4.500C7 2.500 8 1 10 1z" fill="url(#c1)" /><path d="M14 5.500l3.500 6.500L15 20c-1 2.300-2.500 4-5 4H8c-2 0-3-1-3.500-2.500L1.500 14C1 12 1.500 10 3 8.500 4 7 5 6.500 7 6.500L5 14l2 6c.6 1.500 2 2 3 1 2-2 4-9 2.500-12z" fill="url(#c2)" /></svg>
          </TaskItem>
          <TaskItem $w={39} $l={7} $under>
            <svg width="22" height="22" viewBox="0 0 22 22"><path d="M1 3h8l2 2h10v15H1z" fill="#f5c33b" /><path d="M1 7h20v13H1z" fill="#ffd966" /><rect x="6" y="11" width="10" height="9" fill="#3c9cd8" /><rect x="9" y="15" width="4" height="5" fill="#fff" opacity=".75" /></svg>
          </TaskItem>
          <TaskItem $w={39} $l={10} $under>
            <svg width="24" height="25" viewBox="0 0 24 25"><defs><radialGradient id="ff" cx=".5" cy=".5" r=".6"><stop offset="0" stopColor="#ffbd3a" /><stop offset=".6" stopColor="#ff5634" /><stop offset="1" stopColor="#e21b6f" /></radialGradient></defs><path d="M2 10C3 7 4 6 5.500 5c0 1 .5 2 1 2.500C8 4.500 11 3 13.500 0c0 3 2.500 3.500 5.500 6 3.500 3 4 7 3.500 9.500C21.500 21 17 25 12 25 5 25 1 20 1 15c0-2 .5-3.500 1-5z" fill="url(#ff)" /><circle cx="11.500" cy="14" r="5.500" fill="#6b2fb8" /><path d="M7 12c2-2.500 6-2.500 8-1-3 0-3 3-1 4.500-3 1.500-6-.5-7-3.500z" fill="#ff9c2a" /></svg>
          </TaskItem>
          <TaskItem $w={48} $l={9}><ChromeIcon /></TaskItem>
          <TaskItem $w={48}>
            <svg width="24" height="24" viewBox="0 0 24 24"><defs><linearGradient id="e1" x1="0" y1="0" x2="1" y2="1"><stop offset="0" stopColor="#37c6d0" /><stop offset="1" stopColor="#0c59a4" /></linearGradient><linearGradient id="e2" x1="0" y1="0" x2="1" y2="0"><stop offset="0" stopColor="#1e8ed8" /><stop offset="1" stopColor="#4fd6c0" /></linearGradient></defs><circle cx="12" cy="12" r="12" fill="url(#e1)" /><path d="M24 12c0 3-3 5-6 5-4 0-7-2.500-7-6 0-2 1-3.500 3-4.500C10 5 4 7 1 13 1 6 6 0 12 0c7 0 12 5.500 12 12z" fill="url(#e2)" /><path d="M11 11c-1 5 3 10 9 10-3 3-8 4-12 1-3-2-5-7-3-11 2-3 6-3 6 0z" fill="#0f6fc2" /></svg>
          </TaskItem>
          <TaskItem $w={48} $l={2} $active $under>
            <ChromeIcon />
            <TaskBadge>J</TaskBadge>
          </TaskItem>
          <TaskItem $w={41} $l={3} $under>
            <ChromeIcon />
            <TaskPhoto width="16" height="16" viewBox="0 0 16 16"><circle cx="8" cy="8" r="8" fill="#222" /><circle cx="8" cy="6" r="3.500" fill="#b98b6f" /><path d="M3 14c1-3 9-3 10 0z" fill="#e0d8d0" /></TaskPhoto>
          </TaskItem>
          <TaskItem $w={32} $l={10} $under>
            <WordIcon width="25" height="22" viewBox="0 0 25 22"><path d="M7 0h15a2 2 0 0 1 2 2v18a2 2 0 0 1-2 2H7z" fill="#1a5fb8" /><path d="M7 0h17v7H7z" fill="#41a5ee" /><path d="M7 7h17v7H7z" fill="#2b7cd3" /><rect y="5" width="12" height="12" rx="1.500" fill="#185abd" /><text x="2" y="15" fontFamily="Liberation Sans" fontWeight="700" fontSize="10" fill="#fff">W</text></WordIcon>
            <WordTail />
          </TaskItem>
          <Weather>
            <svg width="26" height="30" viewBox="0 0 26 30"><circle cx="13" cy="16" r="11" fill="#f9a01b" /><path d="M0 11c0-3 2-5 5-5 1-3 5-3 7-1 3 0 4 3 3 6z" fill="#c5dbef" /><path d="M12 25c0-3 2-4 4-4 1-2 5-2 6 0 2.500 0 4 2 3 4.500S14 27 12 25z" fill="#dfeaf4" /></svg>
            <RedBadge>1</RedBadge>
          </Weather>
          <WeatherText>30°C<WeatherCond>Sebagian cerah</WeatherCond></WeatherText>
          <Tray>
            <TraySlot $w={24}><ChevronUp size={15} strokeWidth={1.400} /></TraySlot>
            <TraySlot $w={24}>
              <svg width="11" height="18" viewBox="0 0 11 18" fill="none" stroke="#fff" strokeWidth="1.100"><rect x="1" y="5" width="7" height="8" rx="1.500" /><path d="M8 8l2.500-1.500v5L8 10M2 2c2-1 5-1 7 0M2 16c2 1 5 1 7 0" /></svg>
            </TraySlot>
            <TraySlot $w={24}>
              <svg width="15" height="14" viewBox="0 0 15 14" fill="none" stroke="#ddd" strokeWidth="1.100"><path d="M1 13a12 12 0 0 1 12-12M4 13a9 9 0 0 1 9-9M7 13a6 6 0 0 1 6-6M10 13a3 3 0 0 1 3-3" /></svg>
            </TraySlot>
            <TraySlot $w={23}>
              <svg width="17" height="14" viewBox="0 0 17 14" fill="none" stroke="#fff" strokeWidth="1.200"><rect x="6" y="3.500" width="10.500" height="8" /><rect x="7.500" y="5" width="3" height="5" fill="#fff" stroke="none" /><path d="M1.500 3v3M4 3v3M.5 6h4.500v2a2 2 0 0 1-4.500 0zM3 10v3" /></svg>
            </TraySlot>
            <TraySlot $w={23}>
              <svg width="15" height="15" viewBox="0 0 15 15" fill="none" stroke="#ddd" strokeWidth="1.100"><path d="M1 5.500h3L7.500 2v11L4 9.500H1zM10 5.500c1 1 1 3 0 4M12 3.500c2 2 2 6 0 8" /></svg>
            </TraySlot>
          </Tray>
          <Clock>14:26<br />19/11/2024</Clock>
          <Notify>
            <svg width="16" height="15" viewBox="0 0 16 15" fill="#fff"><path d="M0 0h16v12H7l-3 3v-3H0z" /><path d="M3 3.500h10M3 6h10M3 8.500h7" stroke="#333" strokeWidth=".9" /></svg>
            <NotifyCount>1</NotifyCount>
          </Notify>
        </Taskbar>
      </Desktop>
    </>
  );
}
